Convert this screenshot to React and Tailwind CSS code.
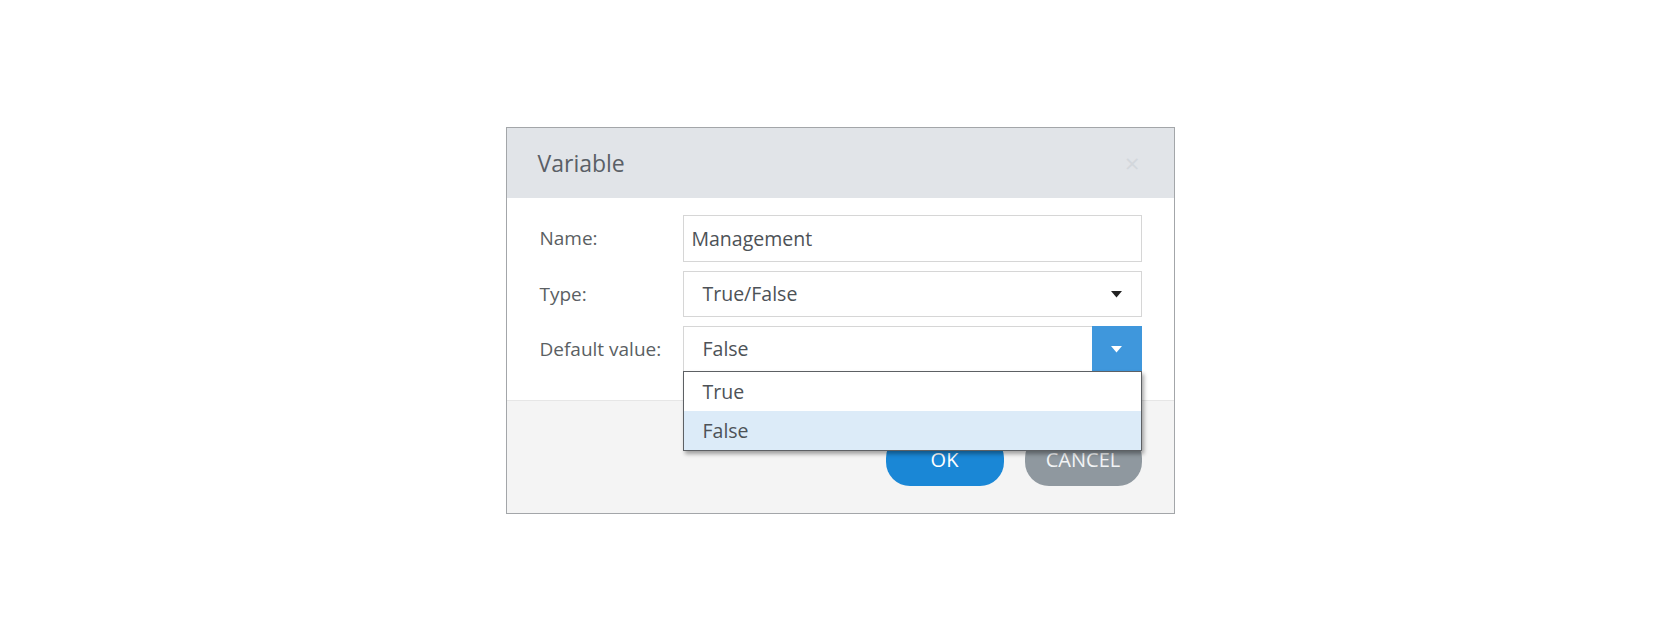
import { useState } from 'react';

const FONT = { fontFamily: '"Open Sans", "Segoe UI", Arial, sans-serif' };

function Caret({ className }) {
  return (
    <svg width="11" height="7" viewBox="0 0 11 7" className={className}>
      <path d="M0 0 L11 0 L5.5 6.5 Z" fill="currentColor" />
    </svg>
  );
}

export default function App() {
  const [value, setValue] = useState('False');
  const options = ['True', 'False'];

  return (
    <div className="h-[641px] w-full bg-white flex items-center justify-center" style={FONT}>
      <div className="w-[669px] border border-[#a3a6a9] bg-white">
        {/* header */}
        <div className="h-[70px] bg-[#e1e4e8] flex items-center justify-between pl-[31px] pr-[34px]">
          <span className="text-[23px] text-[#5a5f66]">Variable</span>
          <span className="text-[26px] leading-none text-[#d3d7dc]">×</span>
        </div>

        {/* body */}
        <div className="pt-[17px] pb-[28px] pl-[33px] pr-[32px] flex flex-col gap-[9px]">
          <div className="flex items-center">
            <label className="w-[143px] text-[19px] text-[#5b5f63]">Name:</label>
            <div className="flex-1 h-[47px] border border-[#d6d6d6] flex items-center px-[8px] text-[19.5px] text-[#4d5257]">
              Management
            </div>
          </div>
          <div className="flex items-center">
            <label className="w-[143px] text-[19px] text-[#5b5f63]">Type:</label>
            <div className="flex-1 h-[46px] border border-[#d6d6d6] flex items-center justify-between pl-[19px] pr-[19px] text-[19.5px] text-[#4d5257]">
              <span>True/False</span>
              <Caret className="text-[#222]" />
            </div>
          </div>
          <div className="flex items-center">
            <label className="w-[143px] text-[19px] text-[#5b5f63]">Default value:</label>
            <div className="flex-1 relative">
              <div className="h-[46px] border border-[#d6d6d6] flex items-center justify-between pl-[19px] text-[19.5px] text-[#4d5257]">
                <span>{value}</span>
                <div className="w-[50px] h-[46px] -mr-px bg-[#3f97dc] flex items-center justify-center">
                  <Caret className="text-white" />
                </div>
              </div>
              {/* open list */}
              <div className="absolute left-0 right-0 top-[45px] z-10 bg-white border border-[#5d6064] shadow-[2px_3px_4px_rgba(0,0,0,0.35)]">
                {options.map((o) => (
                  <div
                    key={o}
                    onClick={() => setValue(o)}
                    className={
                      'h-[39px] flex items-center pl-[19px] text-[19.5px] text-[#4d5257] ' +
                      (o === value ? 'bg-[#dcebf8]' : 'bg-white')
                    }
                  >
                    {o}
                  </div>
                ))}
              </div>
            </div>
          </div>
        </div>

        {/* footer */}
        <div className="h-[113px] bg-[#f4f4f4] border-t border-[#e6e6e6] flex items-center justify-end gap-[21px] pr-[32px] pt-[5px]">
          <button className="w-[118px] h-[52px] rounded-[24px] bg-[#1a87d6] text-white text-[20px] uppercase">
            OK
          </button>
          <button className="w-[117px] h-[52px] rounded-[24px] bg-[#8f989f] text-[#f2f4f5] text-[20px] uppercase">
            Cancel
          </button>
        </div>
      </div>
    </div>
  );
}
